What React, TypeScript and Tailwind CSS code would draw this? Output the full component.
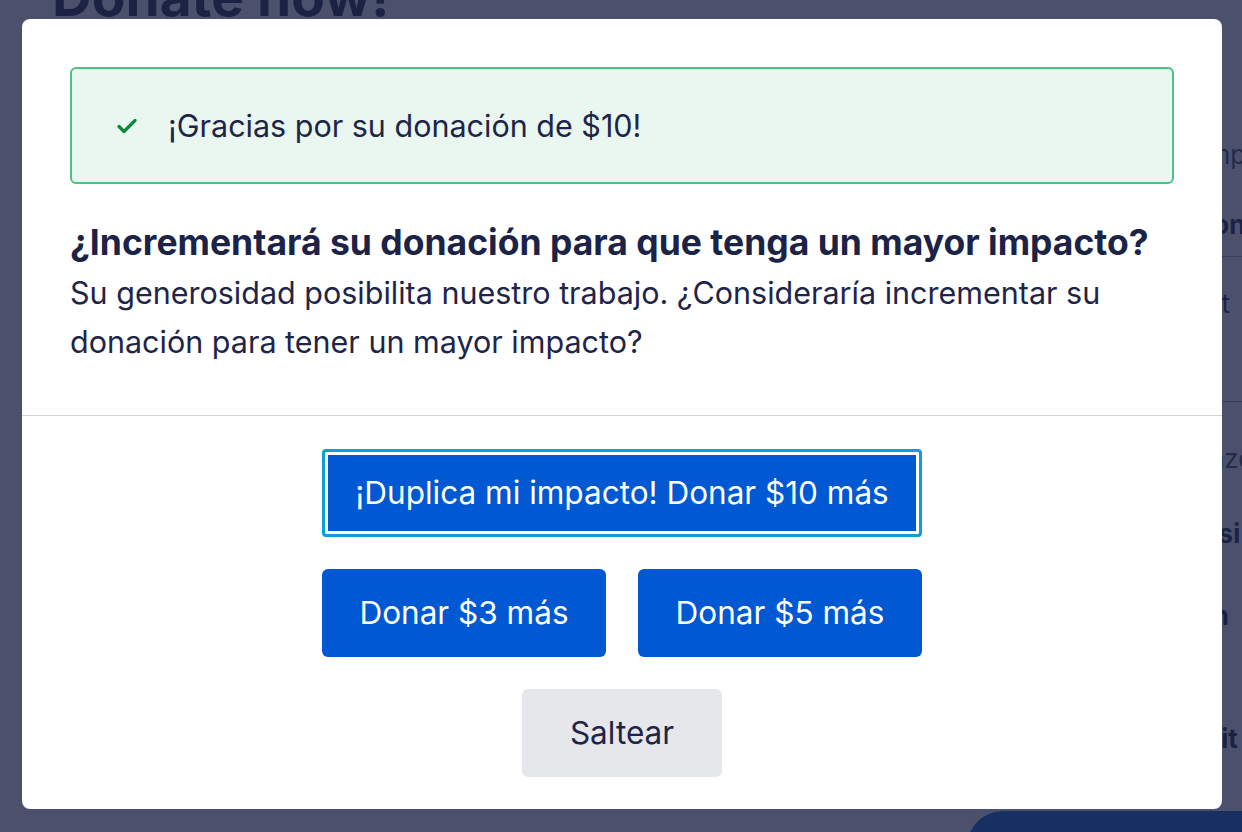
import React from 'react';

const CheckIcon = () => (
  <svg width="20" height="16" viewBox="0 0 20 16" fill="none">
    <path d="M2 8.5l5 5L18 2.5" stroke="#0b8a3b" strokeWidth="3.2" strokeLinecap="round" strokeLinejoin="round" />
  </svg>
);

// the dimmed page sitting behind the modal
const BackgroundPage = () => (
  <div className="flex min-h-[832px] bg-white pl-[52px] text-[#101636]">
    <div className="w-[915px] shrink-0">
      <h1 className="-mt-[31px] text-[55px] font-bold leading-none">Donate now!</h1>
    </div>
    <div className="w-[360px] shrink-0 pt-[140px] text-[26px] leading-[30px]">
      <div className="h-[30px] pl-[206px] text-[#374151]">Completo</div>
      <div className="h-[87px] border-b border-[#9ca3af] pt-[40px] pl-[222px] font-bold">Monto</div>
      <div className="h-[145px] border-b border-[#9ca3af] pt-[32px] pl-[200px]">Ven t</div>
      <div className="h-[75px] pt-[42px] pl-[228px] text-[#374151]">Lazo</div>
      <div className="h-[95px] pt-[42px] pl-[216px] font-bold">Ansi</div>
      <div className="h-[82px] pt-[29px] pl-[206px] font-bold">Bien</div>
      <div className="h-[157px] pt-[70px] pl-[222px] font-bold">Edit</div>
      <div className="h-[60px] rounded-tl-[36px] bg-[#0058d2]" />
    </div>
  </div>
);

export default function App() {
  return (
    <div className="relative h-[832px] w-[1242px] overflow-hidden font-['Inter',sans-serif]">
      <BackgroundPage />
      <div className="fixed inset-0 flex items-start bg-[#1e2548]/80 pt-[19px] pl-[22px]">
        <div className="w-[1200px] rounded-lg bg-white">
          <div className="px-12 pt-12 pb-[49px]">
            <div className="flex h-[117px] items-center gap-[31px] rounded-md border-2 border-[#4ac283] bg-[#eaf7f0] px-[45px]">
              <CheckIcon />
              <span className="text-[30.5px] text-[#1e2548]">¡Gracias por su donación de $10!</span>
            </div>
            <h2 className="mt-[34px] text-[35.5px] font-bold leading-[50px] text-[#1b2347]">
              ¿Incrementará su donación para que tenga un mayor impacto?
            </h2>
            <p className="text-[30.5px] leading-[49px] text-[#1e2548]">
              Su generosidad posibilita nuestro trabajo. ¿Consideraría incrementar su donación para tener un mayor impacto?
            </p>
          </div>
          <div className="border-t border-[#d1d5db]" />
          <div className="flex flex-col items-center gap-8 pt-[33px] pb-8">
            <button className="h-[88px] w-[600px] rounded border-[3px] border-[#0ba0db] bg-[#0058d2] text-[31.5px] text-white shadow-[inset_0_0_0_3px_white]">
              ¡Duplica mi impacto! Donar $10 más
            </button>
            <div className="flex w-[600px] gap-8">
              <button className="h-[88px] flex-1 rounded-md bg-[#0058d2] text-[31.5px] text-white">Donar $3 más</button>
              <button className="h-[88px] flex-1 rounded-md bg-[#0058d2] text-[31.5px] text-white">Donar $5 más</button>
            </div>
            <button className="h-[88px] w-[200px] rounded-md bg-[#e5e7eb] text-[31.5px] text-[#1e2548]">Saltear</button>
          </div>
        </div>
      </div>
    </div>
  );
}
